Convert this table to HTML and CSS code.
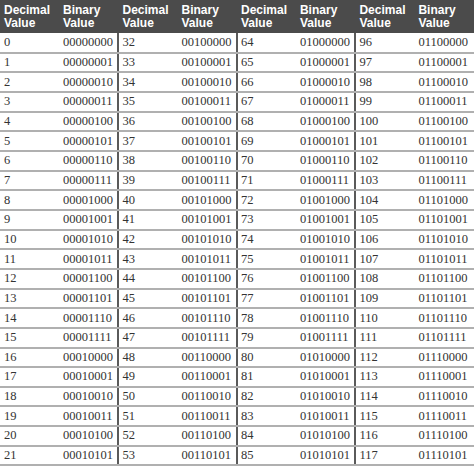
FILE: index.html
```html
<!DOCTYPE html>
<html>
<head>
<meta charset="utf-8">
<link rel="stylesheet" href="styles.css">
</head>
<body>
<table class="bin">
<colgroup>
<col class="c-dec"><col class="c-bin"><col class="c-dec"><col class="c-bin"><col class="c-dec"><col class="c-bin"><col class="c-dec"><col class="c-bin">
</colgroup>
<thead>
<tr>
<th>Decimal<br>Value</th><th>Binary<br>Value</th>
<th>Decimal<br>Value</th><th>Binary<br>Value</th>
<th>Decimal<br>Value</th><th>Binary<br>Value</th>
<th>Decimal<br>Value</th><th>Binary<br>Value</th>
</tr>
</thead>
<tbody>
<tr><td>0</td><td>00000000</td><td class="g">32</td><td>00100000</td><td class="g">64</td><td>01000000</td><td class="g">96</td><td>01100000</td></tr>
<tr><td>1</td><td>00000001</td><td class="g">33</td><td>00100001</td><td class="g">65</td><td>01000001</td><td class="g">97</td><td>01100001</td></tr>
<tr><td>2</td><td>00000010</td><td class="g">34</td><td>00100010</td><td class="g">66</td><td>01000010</td><td class="g">98</td><td>01100010</td></tr>
<tr><td>3</td><td>00000011</td><td class="g">35</td><td>00100011</td><td class="g">67</td><td>01000011</td><td class="g">99</td><td>01100011</td></tr>
<tr><td>4</td><td>00000100</td><td class="g">36</td><td>00100100</td><td class="g">68</td><td>01000100</td><td class="g">100</td><td>01100100</td></tr>
<tr><td>5</td><td>00000101</td><td class="g">37</td><td>00100101</td><td class="g">69</td><td>01000101</td><td class="g">101</td><td>01100101</td></tr>
<tr><td>6</td><td>00000110</td><td class="g">38</td><td>00100110</td><td class="g">70</td><td>01000110</td><td class="g">102</td><td>01100110</td></tr>
<tr><td>7</td><td>00000111</td><td class="g">39</td><td>00100111</td><td class="g">71</td><td>01000111</td><td class="g">103</td><td>01100111</td></tr>
<tr><td>8</td><td>00001000</td><td class="g">40</td><td>00101000</td><td class="g">72</td><td>01001000</td><td class="g">104</td><td>01101000</td></tr>
<tr><td>9</td><td>00001001</td><td class="g">41</td><td>00101001</td><td class="g">73</td><td>01001001</td><td class="g">105</td><td>01101001</td></tr>
<tr><td>10</td><td>00001010</td><td class="g">42</td><td>00101010</td><td class="g">74</td><td>01001010</td><td class="g">106</td><td>01101010</td></tr>
<tr><td>11</td><td>00001011</td><td class="g">43</td><td>00101011</td><td class="g">75</td><td>01001011</td><td class="g">107</td><td>01101011</td></tr>
<tr><td>12</td><td>00001100</td><td class="g">44</td><td>00101100</td><td class="g">76</td><td>01001100</td><td class="g">108</td><td>01101100</td></tr>
<tr><td>13</td><td>00001101</td><td class="g">45</td><td>00101101</td><td class="g">77</td><td>01001101</td><td class="g">109</td><td>01101101</td></tr>
<tr><td>14</td><td>00001110</td><td class="g">46</td><td>00101110</td><td class="g">78</td><td>01001110</td><td class="g">110</td><td>01101110</td></tr>
<tr><td>15</td><td>00001111</td><td class="g">47</td><td>00101111</td><td class="g">79</td><td>01001111</td><td class="g">111</td><td>01101111</td></tr>
<tr><td>16</td><td>00010000</td><td class="g">48</td><td>00110000</td><td class="g">80</td><td>01010000</td><td class="g">112</td><td>01110000</td></tr>
<tr><td>17</td><td>00010001</td><td class="g">49</td><td>00110001</td><td class="g">81</td><td>01010001</td><td class="g">113</td><td>01110001</td></tr>
<tr><td>18</td><td>00010010</td><td class="g">50</td><td>00110010</td><td class="g">82</td><td>01010010</td><td class="g">114</td><td>01110010</td></tr>
<tr><td>19</td><td>00010011</td><td class="g">51</td><td>00110011</td><td class="g">83</td><td>01010011</td><td class="g">115</td><td>01110011</td></tr>
<tr><td>20</td><td>00010100</td><td class="g">52</td><td>00110100</td><td class="g">84</td><td>01010100</td><td class="g">116</td><td>01110100</td></tr>
<tr><td>21</td><td>00010101</td><td class="g">53</td><td>00110101</td><td class="g">85</td><td>01010101</td><td class="g">117</td><td>01110101</td></tr>
</tbody>
</table>
</body>
</html>
```
FILE: styles.css
```css
html, body {
  margin: 0;
  padding: 0;
  background: #ffffff;
}
.bin {
  width: 474px;
  border-collapse: collapse;
  table-layout: fixed;
}
.c-dec { width: 58.5px; }
.c-bin { width: 59px; }
.bin th {
  background: #4b4b4b;
  color: #ffffff;
  font-family: "Liberation Sans", Arial, sans-serif;
  font-weight: bold;
  font-size: 12px;
  line-height: 13px;
  text-align: left;
  vertical-align: top;
  padding: 4px 0 0 4px;
  height: 29px;
  box-sizing: border-box;
}
.bin thead tr {
  height: 33px;
}
.bin td {
  font-family: "Liberation Serif", "Times New Roman", serif;
  font-size: 12.5px;
  color: #333333;
  padding: 0 0 0 4px;
  height: 19.67px;
  line-height: 17px;
  border-bottom: 2px solid #b0b0b0;
  box-sizing: border-box;
  white-space: nowrap;
  overflow: hidden;
}
.bin td.g {
  border-left: 2px solid #5a5a5a;
  padding-left: 3px;
}
```
